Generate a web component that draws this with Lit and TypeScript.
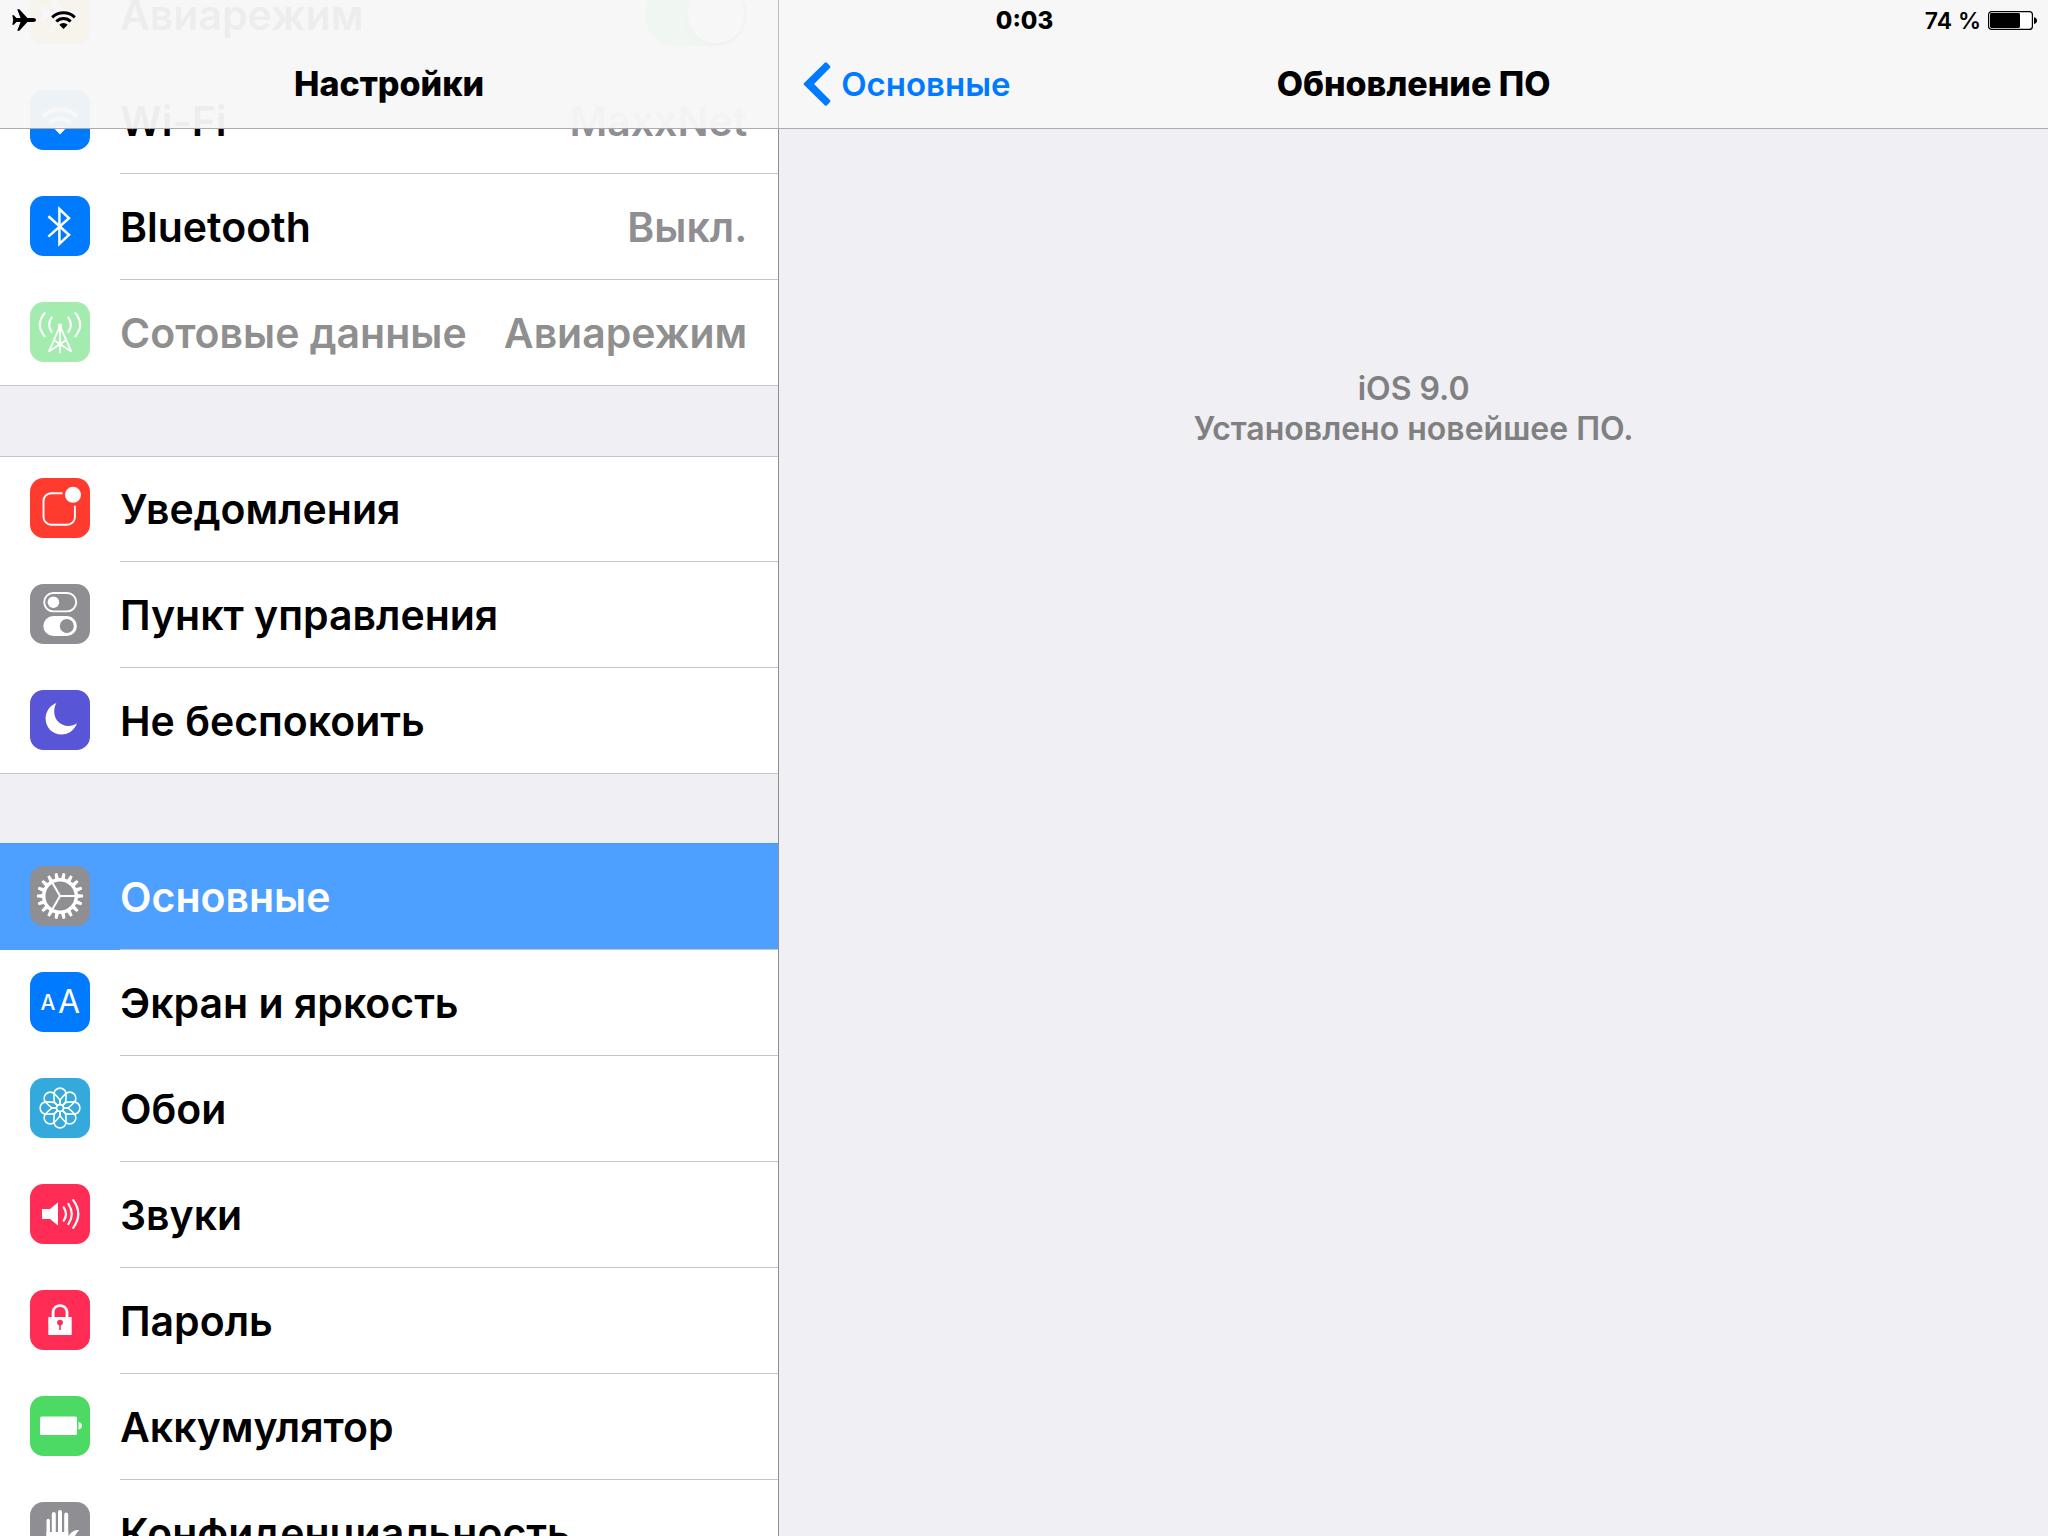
import { LitElement, html, svg, css, nothing, type SVGTemplateResult } from "lit";
import { customElement, property, state } from "lit/decorators.js";
import { classMap } from "lit/directives/class-map.js";

type IconName =
  | "airplane" | "wifi" | "bluetooth" | "cellular" | "notifications" | "control"
  | "moon" | "gear" | "display" | "flower" | "sound" | "lock" | "battery" | "hand";

interface Row {
  id: string;
  icon: IconName;
  label: string;
  value?: string;
  toggle?: boolean;
  disabled?: boolean;
}

const GROUPS: Row[][] = [
  [
    { id: "airplane", icon: "airplane", label: "Авиарежим", toggle: true },
    { id: "wifi", icon: "wifi", label: "Wi-Fi", value: "MaxxNet" },
    { id: "bluetooth", icon: "bluetooth", label: "Bluetooth", value: "Выкл." },
    { id: "cellular", icon: "cellular", label: "Сотовые данные", value: "Авиарежим", disabled: true },
  ],
  [
    { id: "notifications", icon: "notifications", label: "Уведомления" },
    { id: "control", icon: "control", label: "Пункт управления" },
    { id: "dnd", icon: "moon", label: "Не беспокоить" },
  ],
  [
    { id: "general", icon: "gear", label: "Основные" },
    { id: "display", icon: "display", label: "Экран и яркость" },
    { id: "wallpaper", icon: "flower", label: "Обои" },
    { id: "sounds", icon: "sound", label: "Звуки" },
    { id: "passcode", icon: "lock", label: "Пароль" },
    { id: "battery", icon: "battery", label: "Аккумулятор" },
    { id: "privacy", icon: "hand", label: "Конфиденциальность" },
  ],
];

const TILE: Record<IconName, string> = {
  airplane: "#ff9500",
  wifi: "#007aff",
  bluetooth: "#007aff",
  cellular: "#4cd964",
  notifications: "#ff3b30",
  control: "#8e8e93",
  moon: "#5856d6",
  gear: "#8e8e93",
  display: "#007aff",
  flower: "#34aadc",
  sound: "#ff2d55",
  lock: "#ff2d55",
  battery: "#4cd964",
  hand: "#8e8e93",
};

const PLANE =
  "M24 11c0 1.2-1.3 1.9-3 1.9h-5.6L7.4 21.7H5.2L8.6 12.9H4.4L1.9 15.7H.3L1.2 11 .3 6.3h1.6l2.5 2.8h4.2L5.2.3h2.2l8 8.8H21c1.7 0 3 .7 3 1.9z";

/** Outline of a toothed ring's outer edge, centred on 30,30. */
function gearOutline(teeth: number, root: number, tip: number): string {
  const at = (r: number, a: number) =>
    `${(30 + r * Math.cos(a)).toFixed(2)} ${(30 + r * Math.sin(a)).toFixed(2)}`;
  const step = (Math.PI * 2) / teeth;
  const points: string[] = [];
  for (let i = 0; i < teeth; i++) {
    const a = i * step;
    points.push(at(root, a - step * 0.31), at(tip, a - step * 0.16), at(tip, a + step * 0.16), at(root, a + step * 0.31));
  }
  return `M${points.join("L")}Z`;
}

const GLYPH: Record<IconName, SVGTemplateResult> = {
  airplane: svg`<path transform="translate(10 11.5) scale(1.68)" fill="#fff" d=${PLANE} />`,
  wifi: svg`
    <g fill="none" stroke="#fff" stroke-width="4.6">
      <path d="M13 26.5a24.3 24.3 0 0 1 34 0" />
      <path d="M19.4 33.2a15 15 0 0 1 21.2 0" />
    </g>
    <path fill="#fff" d="M30 44.4l-6-6.2a8.6 8.6 0 0 1 12 0z" />`,
  bluetooth: svg`
    <path fill="none" stroke="#fff" stroke-width="2.5" d="M18.4 20.2L39 38.8 29.4 47.8V13l9.6 9.2L18.4 40.6" />`,
  cellular: svg`
    <g fill="none" stroke="#fff" stroke-width="2.1" stroke-linecap="round">
      <path d="M21.7 15.4q-5 7.3 0 14.6M38.3 15.4q5 7.3 0 14.6" />
      <path d="M14.7 11q-9.6 11.7 0 23.4M45.3 11q9.6 11.7 0 23.4" />
      <path stroke-linejoin="round" stroke-width="1.8" d="M30 24v26.4M30 24L19 49.4 35.4 38.6M30 24l11.2 25.4L24.6 38.6" />
    </g>
    <circle cx="30" cy="23.8" r="2.2" fill="#fff" />`,
  notifications: svg`
    <path fill="none" stroke="#fff" stroke-width="1.9" d="M32.4 15.2H21.2a7.7 7.7 0 0 0-7.7 7.7V39a7.7 7.7 0 0 0 7.7 7.7h16a7.7 7.7 0 0 0 7.7-7.7V27.8" />
    <circle cx="43" cy="16.8" r="8" fill="#fff" />`,
  control: svg`
    <rect x="14.2" y="9" width="32" height="18.4" rx="9.2" fill="none" stroke="#fff" stroke-width="1.9" />
    <circle cx="23.4" cy="18.2" r="5.8" fill="#fff" />
    <rect x="13.3" y="32" width="33.6" height="20" rx="10" fill="#fff" />
    <circle cx="36.8" cy="42" r="7" fill="#8e8e93" />`,
  moon: svg`
    <path fill="#fff" d="M26.4 13C20 15.4 15.6 21.4 15.6 28.6 15.6 37.6 22.5 44.6 31.5 44.6 38.6 44.6 44.6 40 47 33.3 44.4 35.2 41.6 36 38.4 36 30.4 36 24.2 29.6 24.2 21.5 24.2 18.4 24.9 15.5 26.4 13Z" />`,
  gear: svg`
    <path fill="#fff" fill-rule="evenodd" d=${gearOutline(18, 18, 23.2) + "M44.6 30a14.6 14.6 0 1 0-29.2 0 14.6 14.6 0 1 0 29.2 0Z"} />
    <path fill="none" stroke="#fff" stroke-width="2.1" d="M45 30H30L22.5 17M30 30l-7.5 13" />`,
  display: svg`
    <g fill="#fff" font-family="Inter, 'Liberation Sans', sans-serif" text-anchor="middle">
      <text x="18" y="38.4" font-size="21" font-weight="500">A</text>
      <text x="39" y="41.4" font-size="32" font-weight="400">A</text>
    </g>`,
  flower: svg`
    <g fill="none" stroke="#fff" stroke-width="1.6">
      ${[0, 45, 90, 135, 180, 225, 270, 315].map(
        (a) => svg`<path transform="translate(30 30) rotate(${a})" d="M-2.4-2.4L-5.6-5.9Q-6.2-10-6.1-13.8A6.1 6.1 0 0 1 6.1-13.8Q6.2-10 5.6-5.9L2.4-2.4" />`,
      )}
      <circle cx="30" cy="30" r="3.4" />
    </g>`,
  sound: svg`
    <path fill="#fff" d="M12 25h8l8-6.4v22.8L20 35h-8z" />
    <g fill="none" stroke="#fff" stroke-width="2.2" stroke-linecap="round">
      <path d="M33.7 23.4q4.6 6.6 0 13.2M38.4 20q6.8 10 0 20M43.2 16.2q10.2 13.8 0 27.6" />
    </g>`,
  lock: svg`
    <path fill="none" stroke="#fff" stroke-width="2.8" d="M23.1 28v-6.3a7 7 0 0 1 13.9 0V28" />
    <path fill="#fff" d="M18.3 27h23.4v18H18.3z" />
    <circle cx="30" cy="32.6" r="2.9" fill="#ff2d55" />
    <path stroke="#ff2d55" stroke-width="1.6" d="M30 33v7" />`,
  battery: svg`
    <rect x="10" y="20.4" width="37" height="18.6" rx="1.6" fill="#fff" />
    <path fill="#fff" d="M48.5 26q3.4.6 3.4 3.7t-3.4 3.7z" />`,
  hand: svg`
    <g fill="none" stroke="#fff" stroke-linecap="round">
      <path stroke-width="3.4" d="M18.2 18.4V34" />
      <path stroke-width="4" d="M23.8 12v22M30 10v24M36.2 12.6V34" />
    </g>
    <path fill="#fff" d="M16.5 30h21.8v4.2c2.8-3.8 5.4-6.6 11-6.2-3.6 3.4-6 9.6-9 14.6-2.4 4-5.4 7.4-12 7.4-8 0-11.8-5-11.8-12z" />`,
};

@customElement("settings-icon")
export class SettingsIcon extends LitElement {
  static styles = css`
    :host { display: block; width: 60px; height: 60px; }
    .tile { display: block; width: 100%; height: 100%; }
  `;

  @property() name: IconName = "gear";

  render() {
    return html`<svg class="tile" viewBox="0 0 60 60" aria-hidden="true">
      <rect width="60" height="60" rx="13.5" fill=${TILE[this.name]} />
      ${GLYPH[this.name]}
    </svg>`;
  }
}

@customElement("settings-list")
export class SettingsList extends LitElement {
  static styles = css`
    :host { display: block; }
    .group {
      list-style: none;
      margin: 0 0 70px;
      padding: 0;
      background: #fff;
      box-shadow: inset 0 1px 0 #c6c6c9;
    }
    .row {
      display: flex;
      gap: 30px;
      min-height: 106px;
      padding-left: 30px;
      box-sizing: border-box;
      color: #000;
      text-decoration: none;
    }
    .icon { flex: none; margin: 22px 0 24px; }
    .body {
      flex: 1;
      min-width: 0;
      display: flex;
      align-items: center;
      justify-content: space-between;
      gap: 24px;
      padding-right: 31px;
      border-bottom: 1px solid #c6c6c9;
      white-space: nowrap;
    }
    .last .row { border-bottom: 1px solid #c6c6c9; }
    .last .icon { margin-bottom: 23px; }
    .last .body { border-bottom: none; }
    .value { color: #8e8e93; }
    .disabled .icon { opacity: 0.5; }
    .disabled .row, .disabled .value { color: #8f8f8f; }
    .selected .row { background: #4da0ff; color: #fff; box-shadow: 0 -1px 0 #4598f8; }
    .switch {
      appearance: none;
      flex: none;
      width: 102px;
      height: 62px;
      margin: 0;
      padding: 3px 3px 3px 43px;
      border-radius: 31px;
      background: #4cd964;
      cursor: pointer;
    }
    .switch::before {
      content: "";
      display: block;
      width: 56px;
      height: 56px;
      border-radius: 50%;
      background: #fff;
      box-shadow: 0 6px 8px rgba(0, 0, 0, 0.2);
    }
    .switch:not(:checked) { padding: 3px 43px 3px 3px; background: #e5e5ea; }
  `;

  @state() private selected = "general";

  private pick(event: Event, row: Row) {
    event.preventDefault();
    if (!row.disabled) this.selected = row.id;
  }

  private renderRow(row: Row) {
    const icon = html`<settings-icon class="icon" .name=${row.icon}></settings-icon>`;
    if (row.toggle) {
      return html`<label class="row">
        ${icon}
        <span class="body"><span>${row.label}</span><input class="switch" type="checkbox" role="switch" checked /></span>
      </label>`;
    }
    return html`<a
      class="row"
      href="#${row.id}"
      aria-disabled=${row.disabled ? "true" : nothing}
      aria-current=${row.id === this.selected ? "page" : nothing}
      @click=${(e: Event) => this.pick(e, row)}
    >
      ${icon}
      <span class="body">
        <span>${row.label}</span>
        ${row.value ? html`<span class="value">${row.value}</span>` : nothing}
      </span>
    </a>`;
  }

  render() {
    return GROUPS.map(
      (rows) => html`<ul class="group">
        ${rows.map(
          (row, i) => html`<li
            class=${classMap({
              last: i === rows.length - 1,
              disabled: !!row.disabled,
              selected: row.id === this.selected,
            })}
          >${this.renderRow(row)}</li>`,
        )}
      </ul>`,
    );
  }
}

@customElement("app-root")
export class AppRoot extends LitElement {
  static styles = css`
    :host {
      display: grid;
      grid-template-columns: 38% 1fr;
      grid-template-rows: 100%;
      position: relative;
      height: 100vh;
      overflow: hidden;
      background: #efeff4;
      color: #000;
      font-family: Inter, "Noto Sans", "Liberation Sans", sans-serif;
      font-size: 41px;
      font-weight: 600;
      line-height: 50px;
    }
    .sidebar { min-width: 0; overflow-y: auto; scrollbar-width: none; }
    .detail {
      min-width: 0;
      border-left: 1px solid #8e8e93;
      padding-top: 369px;
      box-sizing: border-box;
      text-align: center;
      color: #808080;
      font-size: 32px;
      line-height: 40px;
    }
    .message { margin: 0; }
    .top {
      position: absolute;
      inset: 0 0 auto;
      background: rgba(247, 247, 247, 0.96);
      border-bottom: 1px solid rgba(0, 0, 0, 0.3);
    }
    .status {
      position: absolute;
      inset: 0 0 auto;
      display: grid;
      grid-template-columns: 1fr auto 1fr;
      align-items: center;
      height: 40px;
      padding: 0 11px 0 12px;
      box-sizing: border-box;
      font-size: 24px;
      line-height: 38px;
    }
    .signals { display: flex; align-items: center; gap: 14px; }
    .clock { padding-top: 2px; font-weight: 800; }
    .charge { padding-top: 2px; font-size: 23px; }
    .power { display: flex; align-items: center; justify-content: flex-end; gap: 7px; }
    .bars { display: grid; grid-template-columns: 38% 1fr; height: 128px; }
    .bar {
      display: grid;
      grid-template-columns: 1fr auto 1fr;
      align-items: center;
      padding: 40px 24px 0;
    }
    .bar + .bar { border-left: 1px solid rgba(0, 0, 0, 0.22); }
    .title { grid-column: 2; margin: 0; font-size: 34px; font-weight: 800; line-height: 88px; }
    .back {
      display: flex;
      align-items: center;
      gap: 10px;
      width: max-content;
      color: #007aff;
      font-size: 33px;
      line-height: 88px;
      text-decoration: none;
    }
    .glyph { display: block; flex: none; }
  `;

  async firstUpdated() {
    const list = this.renderRoot.querySelector("settings-list") as SettingsList;
    await list.updateComplete;
    this.renderRoot.querySelector(".sidebar")!.scrollTop = 38;
  }

  render() {
    return html`
      <nav class="sidebar" aria-label="Настройки"><settings-list></settings-list></nav>
      <main class="detail">
        <p class="message">iOS 9.0<br />Установлено новейшее ПО.</p>
      </main>
      <header class="top">
        <div class="status">
          <div class="signals">
            <svg class="glyph" width="25" height="22" viewBox="0 0 25 22" aria-hidden="true"><path d=${PLANE} /></svg>
            <svg class="glyph" width="25" height="18" viewBox="0 0 25 18" aria-hidden="true">
              <g fill="none" stroke="#000" stroke-width="2.9">
                <path d="M1.2 6.4a16.1 16.1 0 0 1 22.6 0" />
                <path d="M5.3 10.5a10.2 10.2 0 0 1 14.4 0" />
              </g>
              <path d="M12.5 18L8.3 13.8a6 6 0 0 1 8.4 0z" />
            </svg>
          </div>
          <time class="clock">0:03</time>
          <div class="power">
            <span class="charge">74 %</span>
            <svg class="glyph" width="49" height="19" viewBox="0 0 49 19" aria-hidden="true">
              <rect x="0.6" y="0.6" width="43.8" height="17.8" rx="3" fill="#fff" stroke="#000" stroke-width="1.2" />
              <rect x="2" y="2" width="30" height="15" rx="1.4" />
              <path d="M46 6.2q3 .8 3 3.4t-3 3.4z" />
            </svg>
          </div>
        </div>
        <div class="bars">
          <div class="bar"><h1 class="title">Настройки</h1></div>
          <div class="bar">
            <a class="back" href="#general">
              <svg class="glyph" width="28" height="44" viewBox="0 0 28 44" aria-hidden="true">
                <path
                  fill="#007aff" stroke="#007aff" stroke-width="3" stroke-linejoin="round"
                  d="M2.2 22L22.8 1.9l3 3L9 22l16.8 17.1-3 3z"
                />
              </svg>
              Основные
            </a>
            <h2 class="title">Обновление ПО</h2>
          </div>
        </div>
      </header>
    `;
  }
}
